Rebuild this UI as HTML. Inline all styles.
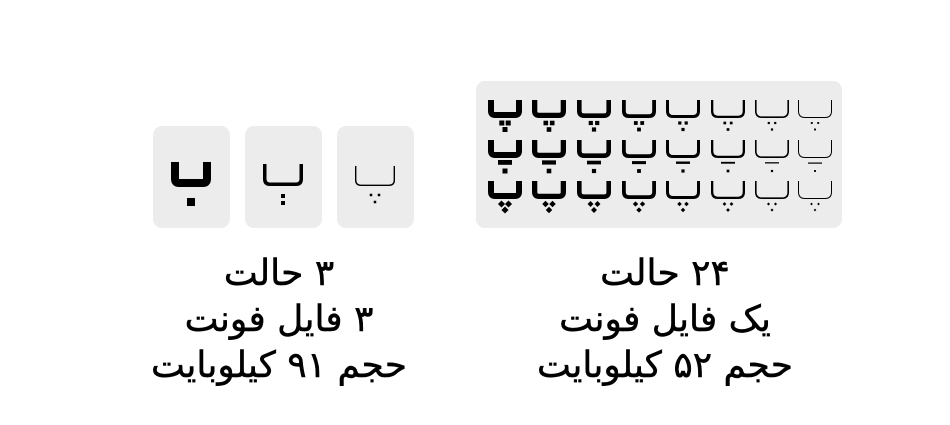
<!DOCTYPE html>
<html><head><meta charset="utf-8"><style>
html,body{margin:0;padding:0;background:#fff;width:950px;height:425px;overflow:hidden;position:relative}
.box{position:absolute;background:#ececec;border-radius:9px}
.txt{position:absolute;direction:rtl;text-align:center;font-family:"DejaVu Sans","Liberation Sans","Noto Sans CJK SC",sans-serif;font-size:36px;line-height:46px;color:#000;width:400px;-webkit-text-stroke:0.5px #000}
svg{position:absolute;left:0;top:0}
</style></head><body>
<div class="box" style="left:476px;top:81px;width:366px;height:147px"></div>
<div class="box" style="left:153px;top:126px;width:77px;height:102px"></div>
<div class="box" style="left:245px;top:126px;width:77px;height:102px"></div>
<div class="box" style="left:337px;top:126px;width:77px;height:102px"></div>
<svg id="s" width="950" height="425" viewBox="0 0 950 425"></svg>
<div class="txt" style="left:465px;top:251px">۲۴ حالت<br>یک فایل فونت<br>حجم ۵۲ کیلوبایت</div>
<div class="txt" style="left:79px;top:251px">۳ حالت<br>۳ فایل فونت<br>حجم ۹۱ کیلوبایت</div>
<script>
var s=document.getElementById('s'),o='';
function bowl(cx,y,w,hw,h,r){var t=y;
o+='<path d="M'+(cx-hw+w/2)+' '+t+' V'+(y+h-r)+' Q'+(cx-hw+w/2)+' '+(y+h-w/2)+' '+(cx-hw+r)+' '+(y+h-w/2)+' H'+(cx+hw-r)+' Q'+(cx+hw-w/2)+' '+(y+h-w/2)+' '+(cx+hw-w/2)+' '+(y+h-r)+' V'+t+'" fill="none" stroke="#000" stroke-width="'+w+'"/>';}
function sq(x,y,d){o+='<rect x="'+(x-d/2)+'" y="'+(y-d/2)+'" width="'+d+'" height="'+d+'"/>';}
function dia(x,y,d){o+='<rect x="'+(x-d/2)+'" y="'+(y-d/2)+'" width="'+d+'" height="'+d+'" transform="rotate(45 '+x+' '+y+')"/>';}
var cols=[505,549,594,639,683,728,772,815],W=[6,5.3,4.6,3.8,3,2.3,1.6,1],D=[5,4.6,4.2,3.8,3.2,2.7,2.2,1.9];
for(var i=0;i<8;i++){var c=cols[i],w=W[i],d=D[i];
bowl(c,100,w,17,18,7);sq(c-3.2,123,d);sq(c+3.2,123,d);sq(c,129.5,d);
bowl(c,140,w,17,18,7);o+='<rect x="'+(c-7)+'" y="'+(163-w/2)+'" width="14" height="'+Math.max(w*0.8,1.2)+'"/>';sq(c,171,d);
bowl(c,181,w,17,18,7);dia(c-3.5,204,d);dia(c+3.5,204,d);dia(c,210,d);}
bowl(191,162,8,20,25,8);sq(191,202,8);
bowl(283,164,3.5,20,22,7);sq(283,196,4);sq(283,203,4);
bowl(375,166,1.4,20,20,6);sq(371,195,2.5);sq(379,195,2.5);sq(375,202,2.5);
s.innerHTML=o;
</script>
</body></html>
